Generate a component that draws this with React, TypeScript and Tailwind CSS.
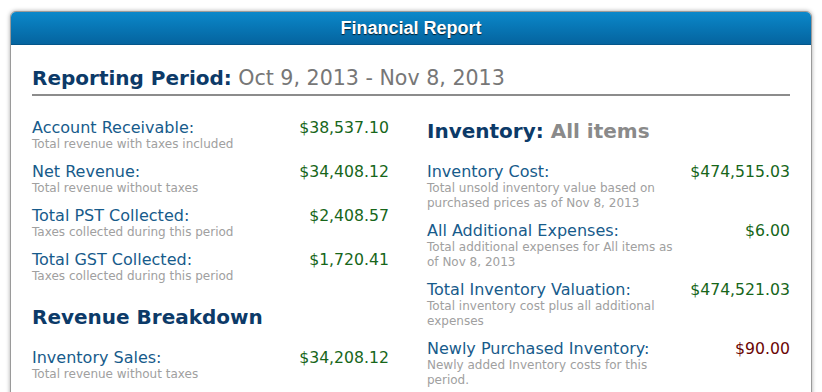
const leftRows = [
  { label: "Account Receivable:", sub: "Total revenue with taxes included", value: "$38,537.10" },
  { label: "Net Revenue:", sub: "Total revenue without taxes", value: "$34,408.12" },
  { label: "Total PST Collected:", sub: "Taxes collected during this period", value: "$2,408.57" },
  { label: "Total GST Collected:", sub: "Taxes collected during this period", value: "$1,720.41" },
];

const breakdownRows = [
  { label: "Inventory Sales:", sub: "Total revenue without taxes", value: "$34,208.12" },
];

const inventoryRows = [
  {
    label: "Inventory Cost:",
    sub: "Total unsold inventory value based on purchased prices as of Nov 8, 2013",
    value: "$474,515.03",
  },
  {
    label: "All Additional Expenses:",
    sub: "Total additional expenses for All items as of Nov 8, 2013",
    value: "$6.00",
  },
  {
    label: "Total Inventory Valuation:",
    sub: "Total inventory cost plus all additional expenses",
    value: "$474,521.03",
  },
  {
    label: "Newly Purchased Inventory:",
    sub: "Newly added Inventory costs for this period.",
    value: "$90.00",
    negative: true,
  },
];

const Row = ({ label, sub, value, negative }) => (
  <div className="flex justify-between items-start">
    <div className="max-w-[250px]">
      <div className="text-[16px] leading-[18px] text-[#175b8b]">{label}</div>
      <div className="text-[12px] leading-[15px] text-[#a0a0a0]">{sub}</div>
    </div>
    <div
      className={
        "text-[15.7px] leading-[18px] " + (negative ? "text-[#6b0505]" : "text-[#17661a]")
      }
    >
      {value}
    </div>
  </div>
);

export default function App() {
  return (
    <div className="h-[392px] overflow-hidden bg-white pt-[11px] px-[10px] font-['DejaVu_Sans',Verdana,sans-serif]">
      <div className="h-[420px] rounded-t-[6px] border border-[#9a9a9a] bg-white shadow-[0_0_4px_rgba(0,0,0,0.35)]">
        <div className="h-[33px] rounded-t-[5px] bg-gradient-to-b from-[#0b88ca] to-[#05649f] border-b border-[#04568a] flex items-center justify-center">
          <h1 className="text-white font-bold text-[18px] font-['Liberation_Sans',Arial,sans-serif] [text-shadow:0_1px_1px_rgba(0,0,0,0.75)]">
            Financial Report
          </h1>
        </div>

        <div className="px-[21px] pt-[21px]">
          <div className="border-b-2 border-[#8c8c8c] pb-[4px] text-[20px] leading-[24px]">
            <span className="font-bold text-[#0c3a68]">Reporting Period:</span>{" "}
            <span className="text-[20.6px] text-[#777777]">Oct 9, 2013 - Nov 8, 2013</span>
          </div>

          <div className="grid grid-cols-[357px_1fr] gap-x-[38px] mt-[23px]">
            <div className="flex flex-col">
              <div className="flex flex-col gap-[11px]">
                {leftRows.map((r) => (
                  <Row key={r.label} {...r} />
                ))}
              </div>
              <h2 className="mt-[21px] text-[20px] leading-[24px] font-bold text-[#0c3a68]">
                Revenue Breakdown
              </h2>
              <div className="mt-[20px] flex flex-col gap-[11px]">
                {breakdownRows.map((r) => (
                  <Row key={r.label} {...r} />
                ))}
              </div>
            </div>

            <div className="flex flex-col">
              <h2 className="text-[20px] leading-[24px] font-bold text-[#0c3a68]">
                Inventory: <span className="text-[#8a8a8a]">All items</span>
              </h2>
              <div className="mt-[20px] flex flex-col gap-[11px]">
                {inventoryRows.map((r) => (
                  <Row key={r.label} {...r} />
                ))}
              </div>
            </div>
          </div>
        </div>
      </div>
    </div>
  );
}
